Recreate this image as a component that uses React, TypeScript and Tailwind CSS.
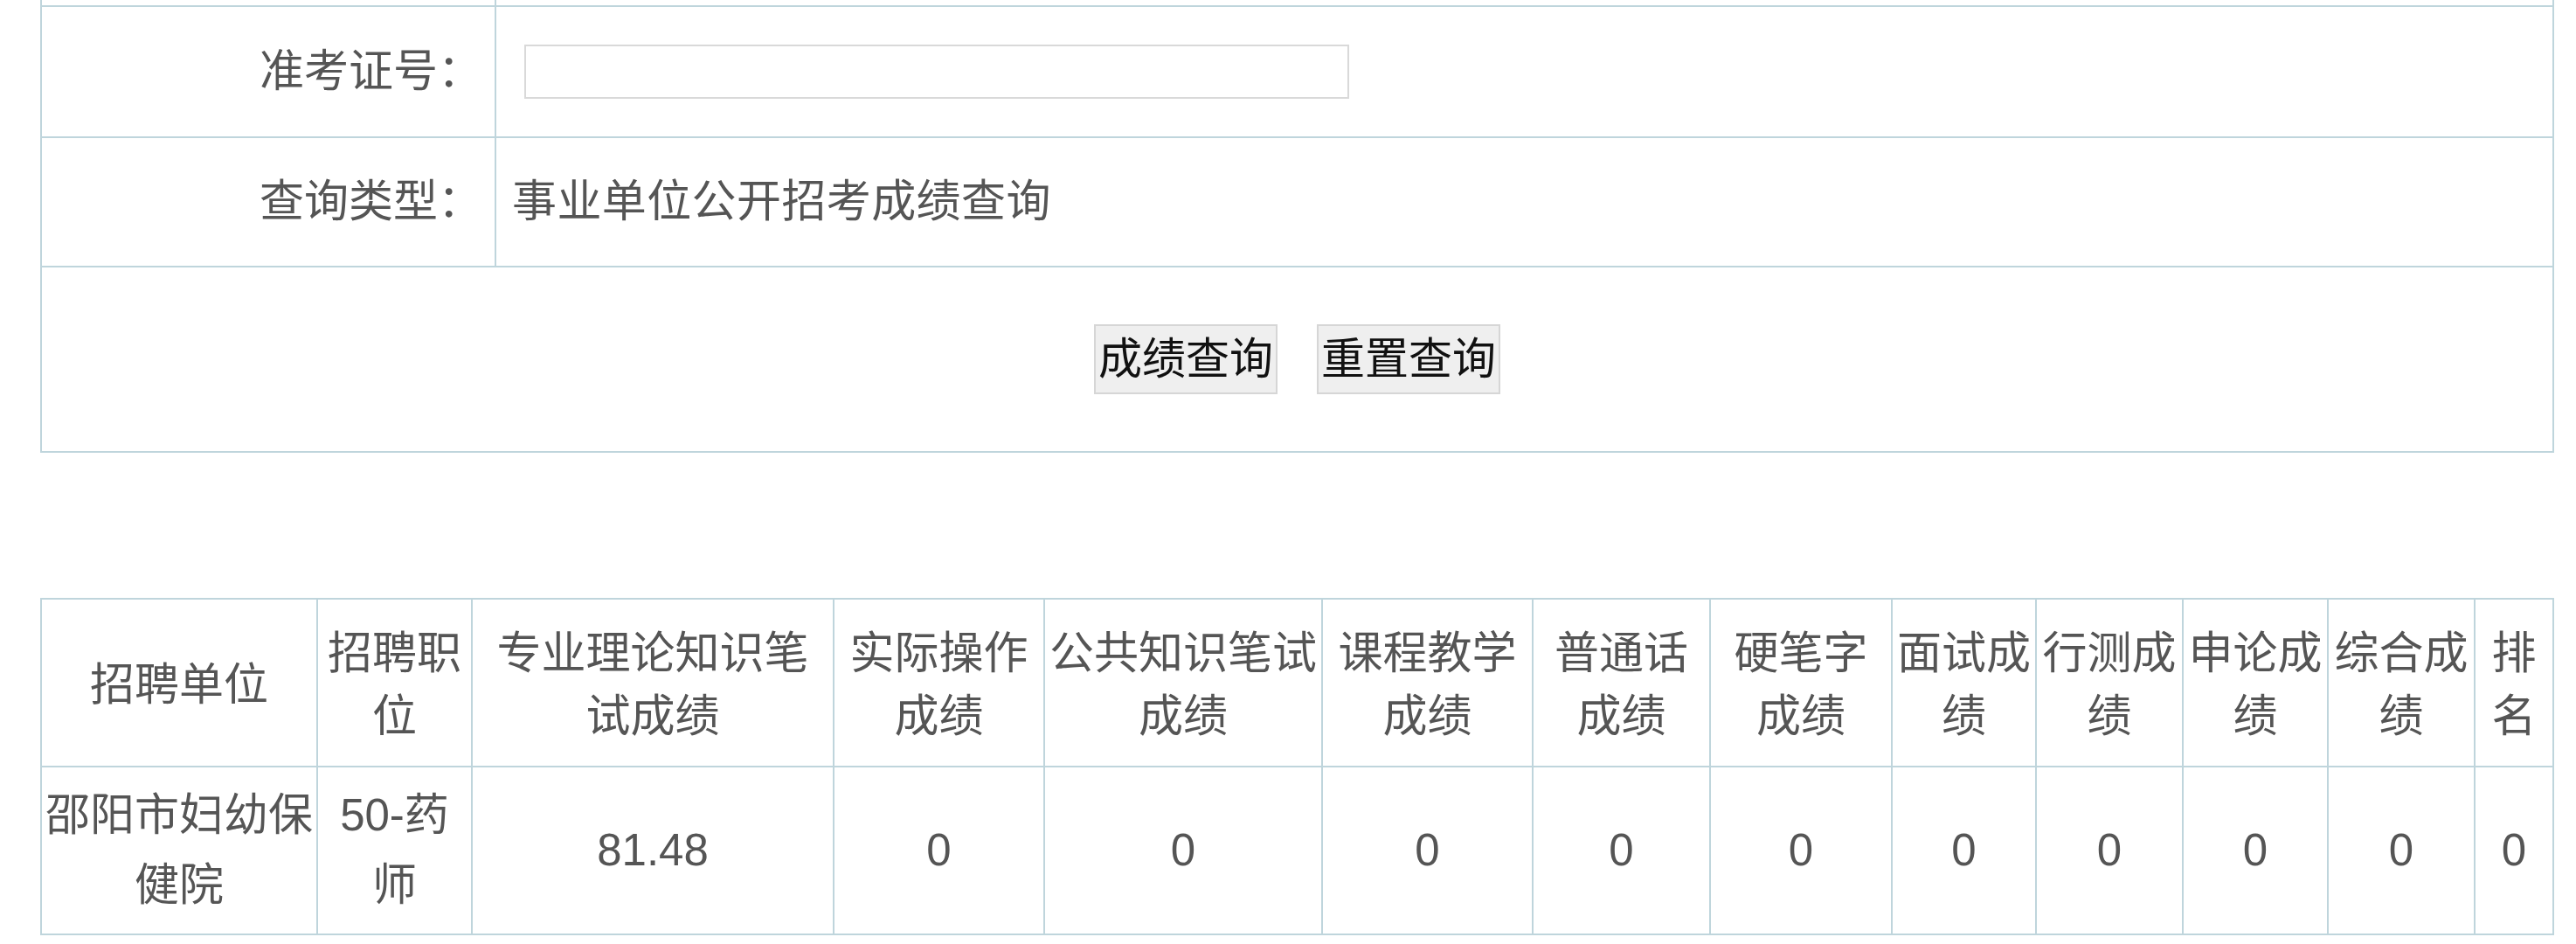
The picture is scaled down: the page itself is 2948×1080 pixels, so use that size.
const headers = [
  '招聘单位',
  '招聘职位',
  '专业理论知识笔试成绩',
  '实际操作成绩',
  '公共知识笔试成绩',
  '课程教学成绩',
  '普通话成绩',
  '硬笔字成绩',
  '面试成绩',
  '行测成绩',
  '申论成绩',
  '综合成绩',
  '排名',
];

const colWidths = [
  'w-[316px]',
  'w-[177px]',
  'w-[414px]',
  'w-[241px]',
  'w-[318px]',
  'w-[241px]',
  'w-[203px]',
  'w-[208px]',
  'w-[165px]',
  'w-[168px]',
  'w-[166px]',
  'w-[168px]',
  'w-[90px]',
];

const row = ['邵阳市妇幼保健院', '50-药师', '81.48', '0', '0', '0', '0', '0', '0', '0', '0', '0', '0'];

const cell = 'border-2 border-[#bfd5dc]';

export default function App() {
  return (
    <div className="min-h-screen bg-white font-['Liberation_Sans','Noto_Sans_CJK_SC',sans-serif] text-[51px] text-[#555]">
      {/* query form */}
      <table className="ml-[46px] w-[2877px] table-fixed border-collapse">
        <colgroup>
          <col className="w-[520px]" />
          <col />
        </colgroup>
        <tbody>
          <tr>
            <td className={`${cell} h-[7px] border-t-0 p-0`} />
            <td className={`${cell} h-[7px] border-t-0 p-0`} />
          </tr>
          <tr>
            <td className={`${cell} h-[150px] pr-[14px] text-right`}>准考证号：</td>
            <td className={`${cell} h-[150px] pl-[32px]`}>
              <input type="text" className="block h-[62px] w-[944px] border-2 border-[#d9d9d9] bg-white outline-none" />
            </td>
          </tr>
          <tr>
            <td className={`${cell} h-[148px] pr-[14px] text-right`}>查询类型：</td>
            <td className={`${cell} h-[148px] pl-[18px] tracking-[0.4px]`}>事业单位公开招考成绩查询</td>
          </tr>
          <tr>
            <td colSpan={2} className={`${cell} h-[212px]`}>
              <div className="flex items-center justify-center gap-[45px]">
                <button
                  type="button"
                  className="h-[80px] border-2 border-[#d6d6d6] bg-[#efefef] px-[3px] text-[50px] leading-none text-[#111]"
                >
                  成绩查询
                </button>
                <button
                  type="button"
                  className="h-[80px] border-2 border-[#d6d6d6] bg-[#efefef] px-[3px] text-[50px] leading-none text-[#111]"
                >
                  重置查询
                </button>
              </div>
            </td>
          </tr>
        </tbody>
      </table>

      {/* results */}
      <table className="ml-[46px] mt-[166px] w-[2877px] table-fixed border-collapse text-center">
        <colgroup>
          {colWidths.map((w, i) => (
            <col key={i} className={w} />
          ))}
        </colgroup>
        <tbody>
          <tr className="leading-[72px]">
            {headers.map((h) => (
              <td key={h} className={`${cell} h-[192px] px-[3px] pt-[6px]`}>
                {h}
              </td>
            ))}
          </tr>
          <tr className="leading-[80px]">
            {row.map((v, i) => (
              <td key={i} className={`${cell} h-[192px] px-[3px]`}>
                {v}
              </td>
            ))}
          </tr>
        </tbody>
      </table>
    </div>
  );
}
